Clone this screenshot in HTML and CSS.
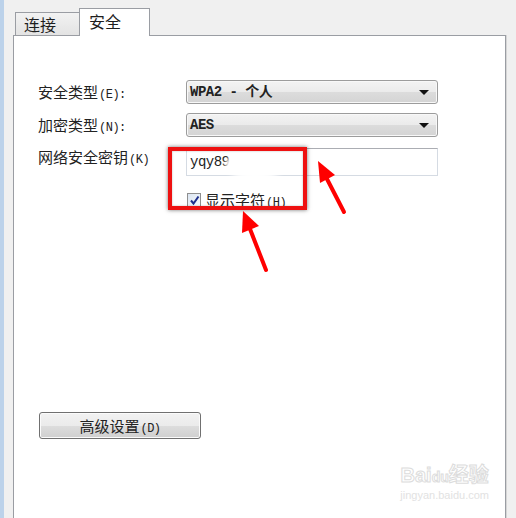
FILE: index.html
```html
<!DOCTYPE html>
<html lang="zh-CN">
<head>
<meta charset="utf-8">
<link rel="stylesheet" href="styles.css">
</head>
<body>
<div class="window">
  <div class="tabs">
    <div class="tab tab-off">连接</div>
    <div class="tab tab-on">安全</div>
  </div>
  <div class="panel">
    <div class="form">
      <div class="label">安全类型<span class="key">(E):</span></div>
      <div class="combo"><span class="val">WPA2 - 个人</span><span class="arrow"></span></div>
      <div class="label">加密类型<span class="key">(N):</span></div>
      <div class="combo"><span class="val">AES</span><span class="arrow"></span></div>
      <div class="label label-key">网络安全密钥<span class="key">(K)</span></div>
      <div class="field-col">
        <div class="textbox"><span class="val">yqy89</span><span class="blot"></span></div>
        <label class="check"><span class="box"><svg width="11" height="11" viewBox="0 0 11 11"><path d="M2 5.5 L4.5 8.5 L9.5 1.5" fill="none" stroke="#1d2f8c" stroke-width="2"/></svg></span><span>显示字符<span class="key">(H)</span></span></label>
      </div>
    </div>
    <div class="spacer"></div>
    <div class="btn-row"><button class="btn">高级设置<span class="key">(D)</span></button></div>
    <div class="watermark">
      <div class="wm-logo">Bai<span class="paw">du</span>经验</div>
      <div class="wm-url">jingyan.baidu.com</div>
    </div>
  </div>
  <div class="highlight"></div>
  <svg class="arrows" width="516" height="518" viewBox="0 0 516 518">
    <line x1="344" y1="212" x2="327" y2="179" stroke="#f00" stroke-width="4" stroke-linecap="round"/>
    <polygon points="318,161 335,175 320,183" fill="#f00"/>
    <line x1="266" y1="270" x2="250" y2="229" stroke="#f00" stroke-width="4" stroke-linecap="round"/>
    <polygon points="243,211 259,226 242,233" fill="#f00"/>
  </svg>
</div>
</body>
</html>
```

FILE: styles.css
```css
html, body {
  margin: 0;
  padding: 0;
}
body {
  width: 516px;
  height: 518px;
  overflow: hidden;
  font-family: "Noto Sans CJK SC", "Liberation Sans", sans-serif;
  color: #1e1e1e;
}
.window {
  position: relative;
  box-sizing: border-box;
  height: 518px;
  display: flex;
  flex-direction: column;
  background: #f0f0f0;
  border-left: 4px solid #bcd2ea;
  padding-left: 9px;
  padding-right: 10px;
}
.tabs {
  height: 35px;
  display: flex;
  align-items: flex-end;
  padding-left: 2px;
}
.tab {
  box-sizing: border-box;
  border: 1px solid #9a9da3;
  border-bottom: none;
  font-size: 16px;
  line-height: 20px;
  display: flex;
  align-items: center;
  padding-left: 8px;
}
.tab-off {
  width: 64px;
  height: 23px;
  background: linear-gradient(#f2f2f2, #e3e3e3);
  border-right: none;
}
.tab-on {
  width: 71px;
  height: 28px;
  background: #fff;
  margin-bottom: -1px;
  position: relative;
  z-index: 1;
  padding-left: 9px;
  align-items: flex-start;
  padding-top: 2px;
}
.panel {
  position: relative;
  flex: 1;
  background: #fff;
  border: 1px solid #9a9da3;
  border-bottom: none;
  box-shadow: 1px 0 0 #d6d6d6;
  display: flex;
  flex-direction: column;
}
.form {
  margin-top: 44px;
  padding-left: 24px;
  display: grid;
  grid-template-columns: 148px 252px;
  row-gap: 9px;
  align-items: start;
}
.label {
  height: 24px;
  line-height: 24px;
  font-size: 15px;
  color: #222;
  white-space: nowrap;
  overflow: visible;
}
.label-key {
  margin-top: -1px;
}
.key {
  font-family: "Liberation Mono", monospace;
  font-size: 12px;
  line-height: 1;
  letter-spacing: -0.5px;
  margin-left: 1px;
}
.combo {
  box-sizing: border-box;
  height: 24px;
  border: 1px solid #9c9c9c;
  border-radius: 3px;
  background: linear-gradient(#f3f3f3 0%, #ebebeb 50%, #dcdcdc 51%, #d4d4d4 100%);
  display: flex;
  align-items: center;
  justify-content: space-between;
  padding: 0 8px 0 3px;
  box-shadow: inset 0 0 0 1px #f8f8f8;
}
.val {
  font-family: "Liberation Mono", "Noto Sans CJK SC", monospace;
  font-size: 14px;
  line-height: 18px;
  font-weight: bold;
  color: #222;
  letter-spacing: -0.5px;
}
.arrow {
  width: 0;
  height: 0;
  border-left: 5px solid transparent;
  border-right: 5px solid transparent;
  border-top: 5px solid #111;
}
.field-col {
  margin-top: 2px;
  display: flex;
  flex-direction: column;
  gap: 16px;
}
.textbox {
  position: relative;
  box-sizing: border-box;
  height: 28px;
  border: 1px solid #d5dbe3;
  border-top-color: #abadb3;
  display: flex;
  align-items: center;
  padding-left: 3px;
}
.textbox .val {
  font-weight: normal;
  font-size: 14px;
}
.blot {
  position: absolute;
  left: 38px;
  top: 1px;
  width: 60px;
  height: 30px;
  border-radius: 50%;
  background: #fff;
  filter: blur(2px);
}
.check {
  display: flex;
  align-items: center;
  gap: 4px;
  height: 16px;
  font-size: 15px;
  line-height: 16px;
  margin-left: 1px;
  color: #222;
  white-space: nowrap;
}
.box {
  box-sizing: border-box;
  width: 14px;
  height: 14px;
  border: 1px solid #8f8f8f;
  background: linear-gradient(135deg, #dce6f2, #f5f8fb);
  display: flex;
  align-items: center;
  justify-content: center;
}
.spacer {
  height: 204px;
}
.btn-row {
  padding-left: 25px;
}
.btn {
  box-sizing: border-box;
  width: 162px;
  height: 27px;
  border: 1px solid #707070;
  border-radius: 3px;
  background: linear-gradient(#f2f2f2 0%, #ebebeb 50%, #dddddd 51%, #cfcfcf 100%);
  box-shadow: inset 0 0 0 1px #fbfbfb;
  font-family: "Noto Sans CJK SC", sans-serif;
  font-size: 15px;
  color: #222;
  padding: 0;
}
.watermark {
  position: absolute;
  right: 16px;
  bottom: 16px;
  color: #e6e6e6;
  text-align: center;
  font-family: "Liberation Sans", "Noto Sans CJK SC", sans-serif;
}
.wm-logo {
  font-size: 20px;
  line-height: 22px;
  font-weight: bold;
  color: #fff;
  -webkit-text-stroke: 1px #dcdcdc;
}
.paw {
  font-size: 14px;
}
.wm-url {
  font-size: 11px;
  line-height: 14px;
  color: #e2e2e2;
}
.highlight {
  position: absolute;
  left: 164px;
  top: 147px;
  width: 139px;
  height: 63px;
  box-sizing: border-box;
  border: 4px solid #ee1111;
  box-shadow: 0 0 4px rgba(0, 0, 0, 0.55), inset 0 0 2px rgba(0, 0, 0, 0.3);
}
.arrows {
  position: absolute;
  left: -4px;
  top: 0;
  pointer-events: none;
}
```
